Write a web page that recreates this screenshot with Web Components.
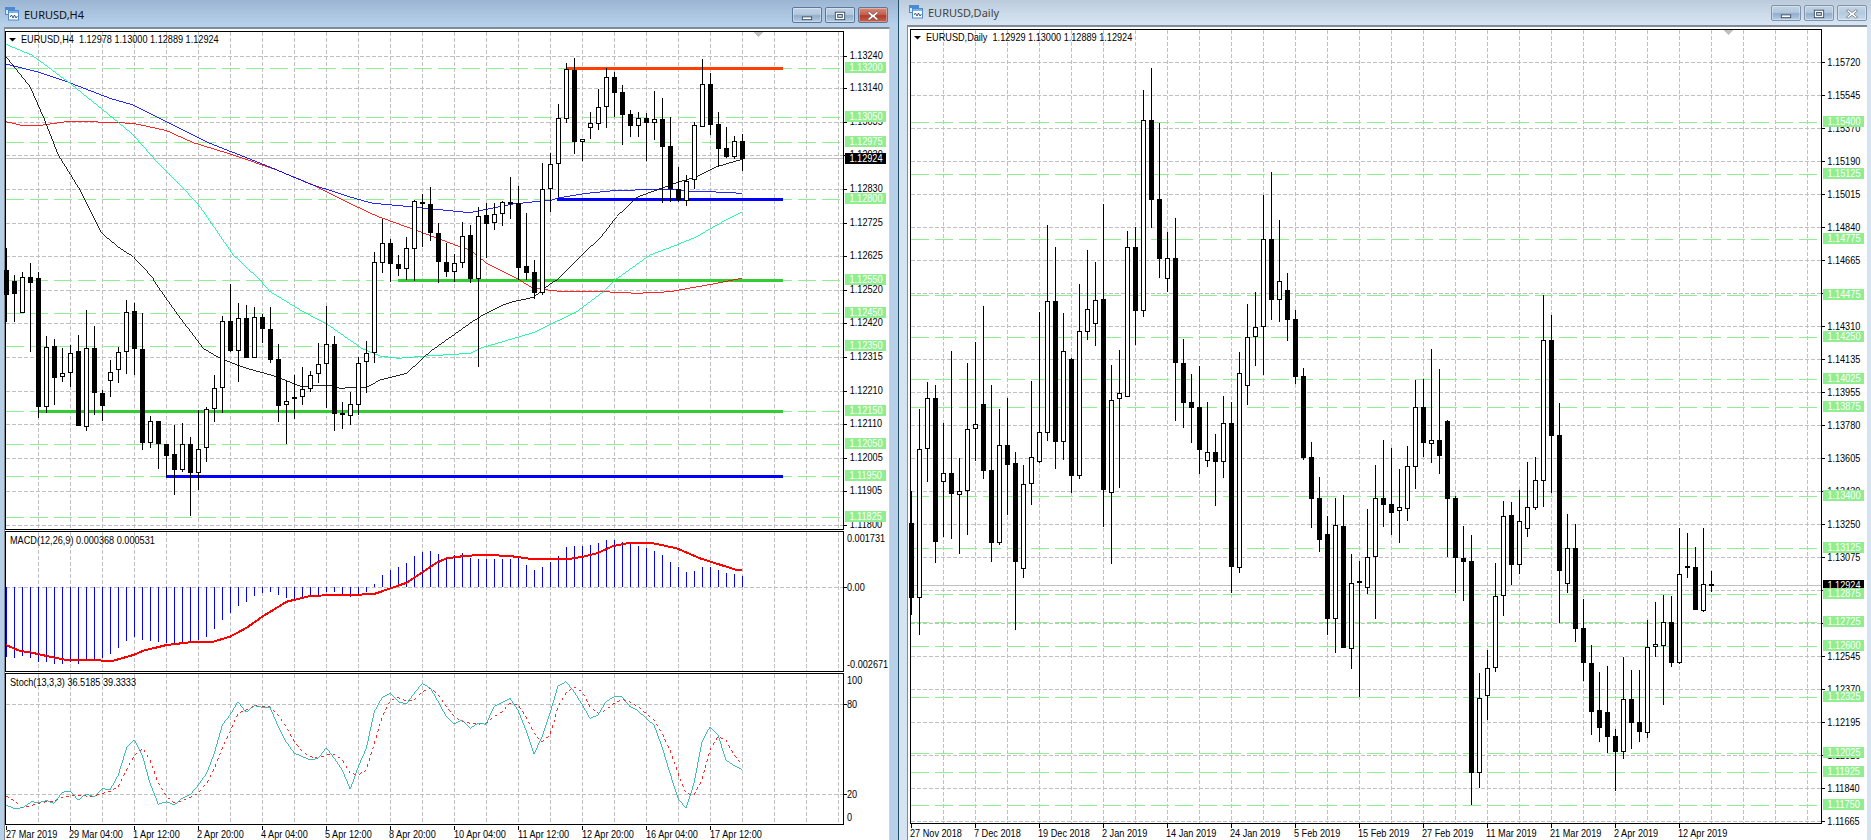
<!DOCTYPE html>
<html>
<head>
<meta charset="utf-8">
<title>EURUSD</title>
<style>
  html, body { margin: 0; padding: 0; height: 100%; overflow: hidden; background: #d6e4f2; }
</style>
</head>
<body>
<mt-desktop>
  <mt-window label="EURUSD,H4" active>
    <chart-pane draw="h4main" x="5" y="31" w="884" h="499"></chart-pane>
    <chart-pane draw="h4macd" x="5" y="531" w="884" h="141"></chart-pane>
    <chart-pane draw="h4stoch" x="5" y="673" w="884" h="152"></chart-pane>
    <chart-pane draw="h4dates" x="5" y="825" w="884" h="15"></chart-pane>
  </mt-window>
  <mt-window label="EURUSD,Daily">
    <chart-pane draw="d1main" x="910" y="29" w="957" h="795"></chart-pane>
    <chart-pane draw="d1dates" x="910" y="824" w="957" h="16"></chart-pane>
  </mt-window>
</mt-desktop>

<script>
// ---- drawing helpers, everything is in page pixels ----
const FONT = `font-family="'Liberation Sans',Arial,sans-serif" font-size="10.4"`;
const LEVEL = '#90ee90', GRID = '#c0c0c0';

const rect = (x, y, w, h, c) => `<rect x="${x}" y="${y}" width="${w}" height="${h}" fill="${c}"/>`;
const hline = (x1, x2, y, c, dash) => `<line x1="${x1}" x2="${x2}" y1="${y + .5}" y2="${y + .5}" stroke="${c}"${dash ? ` stroke-dasharray="${dash}"` : ''}/>`;
const vline = (x, y1, y2, c, dash) => `<line x1="${x + .5}" x2="${x + .5}" y1="${y1}" y2="${y2}" stroke="${c}"${dash ? ` stroke-dasharray="${dash}"` : ''}/>`;
// the terminal font is tall and narrow, so squeeze it a bit
const label = (x, y, s, c = '#000') => `<text transform="translate(${x} ${y}) scale(.88 1)" fill="${c}" ${FONT} style="white-space:pre">${s}</text>`;

// crops were read at 3x, so points are written as crop coords + crop origin
const Z = (a, ox, oy) => {
  const out = [];
  for (let i = 0; i < a.length; i += 2) out.push([ox + a[i] / 3, oy + a[i + 1] / 3]);
  return out;
};
const poly = (pts, c, w = .85, dash) => `<polyline fill="none" stroke="${c}" stroke-width="${w}"${dash ? ` stroke-dasharray="${dash}"` : ''} points="${pts.map(p => p[0].toFixed(1) + ',' + p[1].toFixed(1)).join(' ')}"/>`;

const candles = (data, x0) => data.map(([h, t, b, l, up], k) => {
  const x = x0 + 8 * k;
  let s = rect(x, h, 1, l - h, '#000') + rect(x - 2, t, 5, Math.max(b - t, 1), '#000');
  if (up && b - t > 2) s += rect(x - 1, t + 1, 3, b - t - 2, '#fff');
  return s;
}).join('');

const vgrid = (x0, n, y1, y2) => {
  let s = '';
  for (let i = 0; i < n; i++) s += vline(x0 + 32 * i, y1, y2, GRID, '4 2');
  return s;
};
const ticksY = (ys, x) => ys.map(y => rect(x, y, 3, 1, '#000')).join('');
const ticksX = (x0, n, y) => {
  let s = '';
  for (let i = 0; i < n; i++) s += rect(x0 + 64 * i, y, 1, 4, '#000');
  return s;
};
const levelTag = (x, y, s) => rect(x, y - 6, 41, 11, LEVEL) + label(x + 4.5, y + 3, s, '#fff');
const bidTag = (x, y, s) => rect(x, y - 5, 41, 11, '#000') + label(x + 4.5, y + 3.5, s, '#fff');
const triangle = (x, y) => `<path d="M${x} ${y}h9l-4.5 5z" fill="#c0c0c0"/>`;
const menuArrow = (x, y) => `<path d="M${x} ${y}h7l-3.5 3.5z" fill="#000" shape-rendering="auto"/>`;

// ---- H4 chart ----
const H4 = [
[248,270,295,322,0],[275,281,294,322,0],[272,277,313,313,1],[263,277,283,352,0],[272,278,407,418,0],[336,347,407,413,1],
[339,346,378,405,0],[348,373,377,382,1],[345,353,373,387,1],[335,351,426,426,0],[310,348,427,431,1],[326,348,393,415,0],
[390,393,406,421,0],[360,372,381,397,1],[347,352,370,383,1],[300,312,352,374,1],[303,311,349,375,0],[313,349,443,450,0],
[416,421,443,448,1],[421,421,444,469,0],[444,444,456,477,0],[425,454,470,495,0],[423,444,470,472,1],[437,444,473,516,0],
[410,449,473,490,1],[407,409,448,462,1],[375,388,409,422,1],[316,321,388,413,1],[284,321,351,352,0],[303,318,351,382,1],
[305,318,358,358,0],[307,317,358,358,1],[314,317,329,343,0],[307,329,360,363,0],[344,359,406,422,0],[381,401,405,444,1],
[375,397,399,419,1],[367,389,397,405,1],[371,375,389,392,1],[343,364,374,383,1],[306,344,364,408,1],[336,344,414,431,0],
[402,413,415,429,1],[392,404,416,425,1],[357,363,405,415,1],[341,353,362,393,1],[252,262,353,363,1],[219,243,263,273,1],
[239,243,264,282,0],[255,264,269,276,0],[237,248,269,280,1],[200,201,249,281,1],[194,202,204,247,0],[187,204,233,241,0],
[223,233,262,283,0],[243,262,272,277,0],[254,263,272,282,1],[222,236,263,268,1],[225,235,279,283,0],[207,216,279,367,1],
[203,215,224,258,0],[203,214,223,230,1],[201,202,214,226,1],[177,202,204,219,0],[186,203,268,280,0],[213,266,273,280,0],
[260,272,293,299,0],[163,189,293,295,1],[153,164,189,212,1],[104,118,164,197,1],[63,69,119,123,1],[58,70,142,154,0],
[139,139,142,161,1],[112,123,128,139,1],[89,107,124,130,1],[68,77,107,128,1],[72,77,93,117,0],[85,92,115,145,0],
[110,114,126,137,0],[112,118,126,137,1],[113,118,123,161,0],[91,119,123,140,1],[98,119,147,203,0],[117,146,189,202,0],
[167,189,200,202,0],[175,181,201,206,1],[122,125,180,189,1],[59,84,127,127,1],[73,84,125,135,0],[112,124,149,167,0],
[127,148,157,158,0],[136,141,157,159,1],[134,141,159,171,0]];

const H4_LEVELS = [[68,'1.13200'],[117,'1.13050'],[142,'1.12975'],[199,'1.12800'],[280,'1.12550'],[313,'1.12450'],[346,'1.12350'],[411,'1.12150'],[444,'1.12050'],[476,'1.11950'],[517,'1.11825']];
const H4_GRID = [[56,'1.13240'],[88,'1.13140'],[122,'1.13035'],[155,'1.12930'],[189,'1.12830'],[223,'1.12725'],[256,'1.12625'],[290,'1.12520'],[323,'1.12420'],[357,'1.12315'],[391,'1.12210'],[424,'1.12110'],[458,'1.12005'],[491,'1.11905'],[525,'1.11800']];

const MA_BLACK = [...Z([18,170,60,222,90,260,130,350,175,465,240,570,305,700,360,745,400,770,460,835],0,0),
  ...Z([460,0,530,100,610,205,660,235,730,262,830,290,905,320,990,315,1020,325,1070,322,1100,322,1140,300,1220,280,1290,215,1410,130],0,280),
  ...Z([30,110,100,75,130,65,190,52,250,5],470,280),
  ...Z([262,840,290,810,340,760,390,715,440,650,500,592,560,570,620,548,680,530,740,500,817,478],470,0)];
const MA_GREEN = [...Z([18,133,95,165,210,250,340,355,400,405,470,485,550,565,600,620,700,765,780,840],0,0),
  ...Z([810,35,910,95,985,135,1085,205,1140,228,1195,235,1280,228,1410,220],0,280),
  ...Z([30,205,190,158,320,95,400,35,435,0],470,280),
  ...Z([540,765,620,735,680,710,740,675,817,635],470,0)];
const MA_BLUE = [...Z([18,192,110,215,200,245,330,295,400,315,500,365,630,430,800,497,930,552,1070,597,1120,610,1200,617,1350,632,1410,638],0,0),
  ...Z([130,612,245,600,260,595,350,580,430,572,560,568,620,570,660,575,720,575,817,580],470,0)];
const MA_RED = [...Z([18,365,60,375,130,375,200,365,270,365,400,370,500,392,580,428,700,465,830,510,940,555,1070,620,1130,648,1240,688,1380,740,1410,750],0,0),
  ...Z([50,790,140,835],470,0),
  ...Z([190,25,280,35,400,35,500,40,600,35,750,8],470,280),
  ...Z([815,835],470,0)];

const MACD_BARS = [290,293,288,293,305,307,312,312,305,312,300,297,293,282,265,243,232,240,243,245,250,255,250,247,240,230,208,180,158,137,127,108,100,95,105,115,118,115,107,105,97,97,105,112,105,96,72,45,30,20,10]
  .map(v => 560 + v / 3)
  .concat([556,552,551,554,557,555,553,558,559,559,559,559,559,557,565,570,567,562,556,547,546,546,545,543,540,540,542,543,546,548,551,555,562,567,572,571,567,567,570,573,574,576]);
const MACD_LINE = [...Z([18,255,60,273,90,277,140,288,200,300,340,302,400,285,430,272,500,255,570,247,640,245,690,230,740,203,790,168,860,125,930,108,1000,105,1120,103,1220,68,1310,8],0,560),
  ...Z([1340,835,1400,827],0,280),
  ...Z([50,825,120,828,190,838,290,838,340,830,380,820,430,798,480,788,550,790,620,805,690,835],470,280),
  ...Z([800,30,817,30],470,560)];
const STOCH_MAIN = [...Z([18,735,45,747,70,742,95,725,115,728,140,722,162,730,187,697,210,693,235,720,258,702,283,710,307,685,330,690,355,645,380,563,403,540,428,590,450,670,475,733,500,725,523,735,547,715,572,703,595,675,620,640,643,580,667,495,690,465,714,425,738,457,763,437,787,442,810,442,835,500,858,545,883,580,908,590,932,600,955,595,979,563,1003,595,1027,630,1051,688,1075,620,1099,565,1123,455,1147,412,1171,400,1195,425,1219,432,1243,400,1267,370,1291,385,1315,425,1339,470,1363,492,1387,480,1411,505],0,560),
  ...Z([24,490,48,493,72,440,96,428,120,415,144,450,168,510,192,582,216,530,240,460,264,378,288,365,312,395,336,433,360,475,384,465,408,425,432,410,456,410,480,440,504,452,528,475,552,495,576,560,600,640,624,715,648,745,672,670,696,545,720,500,744,525,768,600,792,617,816,628],470,560)];
const STOCH_SIGNAL = [...Z([18,708,40,720,65,742,90,738,115,730,140,725,162,725,187,712,210,708,235,705,258,708,283,708,307,700,330,695,355,680,380,630,403,585,428,565,450,600,475,670,500,710,523,728,547,722,572,712,595,700,620,670,643,625,667,565,690,515,714,460,738,450,763,437,787,440,810,440,835,465,858,500,883,545,908,575,932,590,955,595,979,585,1003,583,1027,600,1051,640,1075,645,1099,630,1123,550,1147,470,1171,420,1195,413,1219,422,1243,420,1267,395,1291,385,1315,405,1339,440,1363,470,1387,485,1411,490],0,560),
  ...Z([24,493,48,490,72,470,96,455,120,430,144,435,168,470,192,520,216,545,240,525,264,440,288,400,312,380,336,395,360,440,384,460,408,450,432,430,456,418,480,425,504,440,528,460,552,480,576,520,600,570,624,640,648,700,672,705,696,660,720,570,744,530,768,540,792,585,816,612],470,560)];

const H4_DATES = [[6,'27 Mar 2019'],[69,'29 Mar 04:00'],[133,'1 Apr 12:00'],[197,'2 Apr 20:00'],[261,'4 Apr 04:00'],[325,'5 Apr 12:00'],[389,'8 Apr 20:00'],[454,'10 Apr 04:00'],[518,'11 Apr 12:00'],[582,'12 Apr 20:00'],[646,'16 Apr 04:00'],[710,'17 Apr 12:00']];

// ---- daily chart ----
const D1 = [
[491,523,598,615,0],[409,449,598,635,1],[382,398,449,482,1],[385,398,542,563,0],[423,473,482,537,1],[351,473,494,539,0],
[458,491,495,554,1],[363,429,491,535,1],[342,424,429,461,1],[306,404,471,479,0],[385,470,543,562,0],[409,445,543,545,1],
[398,445,465,515,0],[452,463,562,630,0],[465,484,569,578,1],[381,457,484,505,1],[312,432,462,463,1],[225,301,433,441,1],
[247,301,442,469,0],[313,351,442,460,1],[358,359,476,493,0],[284,331,476,479,1],[250,309,332,340,1],[262,300,324,346,1],
[204,299,490,527,0],[365,400,493,564,1],[350,393,399,488,1],[231,247,397,397,1],[227,247,311,345,0],[90,120,311,317,1],
[68,120,200,228,0],[123,199,259,278,0],[232,258,279,292,1],[218,258,363,421,0],[339,363,403,428,0],[374,402,408,443,0],
[366,407,450,474,0],[402,452,461,467,1],[434,452,462,506,0],[396,423,462,478,1],[402,423,567,593,0],[352,373,568,573,1],
[304,337,386,405,1],[292,327,337,366,1],[195,239,327,375,1],[172,239,300,320,0],[220,281,300,322,1],[273,290,320,341,0],
[310,319,377,384,0],[368,376,458,460,0],[442,457,499,528,0],[477,498,540,552,0],[516,534,619,635,0],[498,525,619,653,1],
[495,526,648,648,0],[554,583,649,669,1],[561,581,583,697,1],[509,557,588,594,1],[465,498,557,619,1],[440,498,505,527,0],
[448,504,513,535,0],[469,507,511,543,1],[446,466,509,521,1],[380,407,467,489,1],[379,407,443,457,0],[349,440,444,463,1],
[369,440,456,474,0],[420,421,499,557,0],[496,498,558,593,0],[526,558,562,601,0],[535,561,773,805,0],[673,698,773,788,1],
[650,668,696,720,1],[563,596,668,672,1],[501,516,596,616,1],[502,515,565,585,0],[490,521,565,574,1],[462,507,529,537,1],
[457,480,508,510,1],[295,340,481,507,1],[315,340,436,493,0],[403,435,571,623,0],[514,548,584,593,1],[524,548,629,642,0],
[599,628,663,681,0],[645,663,712,735,0],[672,710,728,742,0],[666,712,737,753,0],[729,736,752,791,0],[657,699,752,759,1],
[670,699,723,749,0],[670,722,732,742,0],[620,647,733,738,1],[602,644,647,657,1],[595,622,646,705,1],[596,622,663,667,0],
[528,574,663,664,1],[533,566,568,578,0],[547,567,610,610,0],[528,584,611,612,1],[571,584,586,592,0]];

const D1_LEVELS = [[122,'1.15400'],[174,'1.15125'],[239,'1.14775'],[295,'1.14475'],[337,'1.14250'],[379,'1.14025'],[407,'1.13875'],[496,'1.13400'],[548,'1.13125'],[594,'1.12875'],[622,'1.12725'],[646,'1.12600'],[697,'1.12325'],[753,'1.12025'],[772,'1.11925'],[805,'1.11750']];
const D1_PRICES = ['1.15720','1.15545','1.15370','1.15190','1.15015','1.14840','1.14665','1.14490','1.14310','1.14135','1.13955','1.13780','1.13605','1.13430','1.13250','1.13075','1.12900','1.12720','1.12545','1.12370','1.12195','1.12020','1.11840','1.11665'];
const D1_GRID = D1_PRICES.map((p, i) => [62 + 33 * i, p]);
const D1_DATES = ['27 Nov 2018','7 Dec 2018','19 Dec 2018','2 Jan 2019','14 Jan 2019','24 Jan 2019','5 Feb 2019','15 Feb 2019','27 Feb 2019','11 Mar 2019','21 Mar 2019','2 Apr 2019','12 Apr 2019'];

// ---- panes ----
const DRAW = {
  h4main() {
    const ys = H4_GRID.map(g => g[0]);
    return vgrid(38, 26, 32, 529)
      + ys.map(y => hline(6, 843, y, GRID, '4 2')).join('')
      + H4_LEVELS.map(l => hline(6, 843, l[0], LEVEL, '18 6')).join('')
      + hline(6, 843, 158, GRID)
      + rect(398, 279, 385, 3, '#32cd32') + rect(38, 410, 745, 3, '#32cd32')
      + rect(557, 198, 226, 3, '#0000ff') + rect(166, 475, 617, 3, '#0000ff')
      + rect(567, 67, 216, 3, '#ff4000')
      + poly(MA_RED, '#ff0000') + poly(MA_BLUE, '#0000ff') + poly(MA_GREEN, '#00fa9a') + poly(MA_BLACK, '#000')
      + candles(H4, 6)
      + triangle(754, 32)
      + rect(5, 31, 839, 1, '#000') + rect(5, 31, 1, 499, '#000') + rect(843, 31, 1, 499, '#000') + rect(5, 529, 839, 1, '#000')
      + ticksY(ys, 844)
      + H4_GRID.map(g => label(849.7, g[0] + 3, g[1])).join('')
      + H4_LEVELS.map(l => levelTag(845, l[0], l[1])).join('')
      + bidTag(845, 158, '1.12924')
      + menuArrow(9, 38)
      + label(21, 43, 'EURUSD,H4  1.12978 1.13000 1.12889 1.12924');
  },
  h4macd() {
    return vgrid(38, 26, 532, 671)
      + hline(6, 843, 587, GRID, '4 2')
      + MACD_BARS.map((y, k) => rect(6 + 8 * k, Math.min(y, 587), 1, Math.abs(587 - y), '#0000ff')).join('')
      + poly(MACD_LINE, '#ff0000', 2)
      + rect(5, 531, 839, 1, '#000') + rect(5, 531, 1, 141, '#000') + rect(843, 531, 1, 141, '#000') + rect(5, 671, 839, 1, '#000')
      + ticksY([587], 844)
      + label(10, 544, 'MACD(12,26,9) 0.000368 0.000531')
      + label(847, 541.5, '0.001731') + label(847, 590.5, '0.00') + label(847, 667.5, '-0.002671');
  },
  h4stoch() {
    return vgrid(38, 26, 674, 824)
      + hline(6, 843, 704, GRID, '4 2') + hline(6, 843, 794, GRID, '4 2')
      + poly(STOCH_SIGNAL, '#ff0000', .85, '3 3') + poly(STOCH_MAIN, '#20b2aa')
      + rect(5, 673, 839, 1, '#000') + rect(5, 673, 1, 152, '#000') + rect(843, 673, 1, 152, '#000') + rect(5, 824, 839, 1, '#000')
      + ticksY([704, 794], 844)
      + label(10, 686, 'Stoch(13,3,3) 36.5185 39.3333')
      + label(847, 683.5, '100') + label(847, 707.5, '80') + label(847, 797.5, '20') + label(847, 820.5, '0');
  },
  h4dates() {
    return ticksX(6, 12, 825) + H4_DATES.map(d => label(d[0], 836.5, d[1])).join('');
  },
  d1main() {
    const ys = D1_GRID.map(g => g[0]);
    return vgrid(943, 28, 30, 823)
      + ys.map(y => hline(911, 1821, y, GRID, '4 2')).join('')
      + D1_LEVELS.map(l => hline(911, 1821, l[0], LEVEL, '18 6')).join('')
      + hline(911, 1821, 585, GRID)
      + candles(D1, 911)
      + triangle(1724, 30)
      + rect(910, 29, 912, 1, '#000') + rect(910, 29, 1, 795, '#000') + rect(1821, 29, 1, 795, '#000') + rect(910, 823, 912, 1, '#000')
      + ticksY(ys, 1822)
      + D1_GRID.map(g => label(1827.3, g[0] + 3.5, g[1])).join('')
      + bidTag(1823, 585, '1.12924')
      + D1_LEVELS.map(l => levelTag(1823, l[0], l[1])).join('')
      + menuArrow(914, 36)
      + label(926, 41, 'EURUSD,Daily  1.12929 1.13000 1.12889 1.12924');
  },
  d1dates() {
    return ticksX(911, 13, 824) + D1_DATES.map((d, i) => label(910 + 64 * i, 836.5, d)).join('');
  }
};

// ---- components ----
class MtDesktop extends HTMLElement {
  constructor() {
    super();
    this.attachShadow({mode: "open"}).innerHTML = `
      <style>
        :host { display: flex; width: 1871px; height: 840px; overflow: hidden; }
      </style>
      <slot></slot>`;
  }
}

class ChartPane extends HTMLElement {
  connectedCallback() {
    const root = this.shadowRoot || this.attachShadow({mode: "open"});
    const [x, y, w, h] = ['x', 'y', 'w', 'h'].map(a => this.getAttribute(a));
    root.innerHTML = `
      <style>
        :host { display: block; }
        svg { display: block; overflow: visible; }
      </style>
      <svg width="${w}" height="${h}" viewBox="${x} ${y} ${w} ${h}" shape-rendering="crispEdges">${DRAW[this.getAttribute('draw')]()}</svg>`;
  }
}

class WinButton extends HTMLElement {
  connectedCallback() {
    const kind = this.getAttribute('kind');
    const glyphs = {
      min: `<rect x="10" y="9.5" width="10" height="3" fill="#fff" stroke="#3d4f66"/>`,
      max: `<rect x="10" y="4.5" width="10" height="8" fill="#fff" stroke="#3d4f66"/><rect x="12.5" y="7" width="5" height="3" fill="#c4d4e4" stroke="#3d4f66"/>`,
      close: `<path d="M11 4l4 3 4-3 2 1-4 3.5 4 3.5-2 1-4-3-4 3-2-1 4-3.5-4-3.5z" fill="#fff" stroke="#5a5a60" stroke-width=".7"/>`
    };
    this.attachShadow({mode: "open"}).innerHTML = `
      <style>
        :host {
          display: block;
          width: 30px;
          height: 16px;
          box-sizing: border-box;
          border: 1px solid var(--btn-border, #64799a);
          border-radius: 2px;
          background: linear-gradient(#c0d2e5 0%, #b3c8de 45%, #93adca 55%, #b6cde4 100%);
          box-shadow: inset 0 0 0 1px rgba(255,255,255,.35);
        }
        :host([kind="close"]) { background: var(--close-bg, linear-gradient(#d08a7c 0%, #c8604f 45%, #b23c2a 55%, #c9604c 100%)); }
        svg { display: block; margin: 0 auto; }
      </style>
      <svg width="28" height="14" viewBox="0 0 30 15">${glyphs[kind]}</svg>`;
  }
}

class TitleBar extends HTMLElement {
  connectedCallback() {
    this.attachShadow({mode: "open"}).innerHTML = `
      <style>
        :host {
          display: flex;
          flex: none;
          align-items: flex-start;
          box-sizing: border-box;
          font: 11px "Noto Sans", "Open Sans", sans-serif;
        }
        svg { flex: none; }
        .name { flex: 1; margin-left: 5px; white-space: pre; }
        .btns { display: flex; gap: 3px; }
      </style>
      <svg width="14" height="14" viewBox="0 0 14 14">
        <rect x=".5" y=".5" width="9" height="7" fill="#dcebf9" stroke="#4d8bd0"/>
        <rect x="1" y="1" width="8" height="2" fill="#4d8bd0"/>
        <rect x="3.5" y="3.5" width="10" height="9.5" fill="#fff" stroke="#4d8bd0"/>
        <rect x="4" y="4" width="9" height="2" fill="#7fb0e2"/>
        <path d="M5 10l1.5-2 1.5 3 1.5-3 1.5 3 1.5-2" fill="none" stroke="#2a4a6a" stroke-width=".9"/>
      </svg>
      <span class="name">${this.getAttribute('label')}</span>
      <div class="btns">
        <win-button kind="min"></win-button>
        <win-button kind="max"></win-button>
        <win-button kind="close"></win-button>
      </div>`;
  }
}

class MtWindow extends HTMLElement {
  constructor() {
    super();
    this.attachShadow({mode: "open"}).innerHTML = `
      <style>
        :host { display: flex; flex-direction: column; flex: none; box-sizing: border-box; color: #111; }
        :host([active]) { width: 899px; background: #b8cfe8; border-right: 1px solid #1f4f6a; }
        :host(:not([active])) { width: 972px; background: #d6e4f2; color: #444; }
        title-bar { height: 27px; padding: 7px 10px 0 5px; background: linear-gradient(#9cb5d2, #b9d2ec); --btn-border: #5f7796; }
        :host(:not([active])) title-bar {
          height: 25px; padding: 5px 4px 0 10px; background: linear-gradient(#bccbdb, #d8e6f4);
          --btn-border: #7f93ad;
          --close-bg: linear-gradient(#c5d5e5, #b4c9de 50%, #c9dbec);
        }
        .client {
          flex: 1;
          min-height: 0;
          background: #fff;
          border-top: 2px solid #808b98;
          padding-top: 2px;
        }
        :host([active]) .client { margin: 0 8px 0 4px; border-left: 1px solid #808b98; border-right: 1px solid #d0d4d8; }
        :host(:not([active])) .client { margin: 0 4px 0 8px; border-left: 1px solid #808b98; padding-left: 2px; }
        .stack { display: flex; flex-direction: column; gap: 1px; }
        :host(:not([active])) .stack { gap: 0; }
      </style>
      <title-bar label="${this.getAttribute('label')}"></title-bar>
      <div class="client"><div class="stack"><slot></slot></div></div>`;
  }
}

customElements.define("chart-pane", ChartPane);
customElements.define("win-button", WinButton);
customElements.define("title-bar", TitleBar);
customElements.define("mt-window", MtWindow);
customElements.define("mt-desktop", MtDesktop);
</script>
</body>
</html>
